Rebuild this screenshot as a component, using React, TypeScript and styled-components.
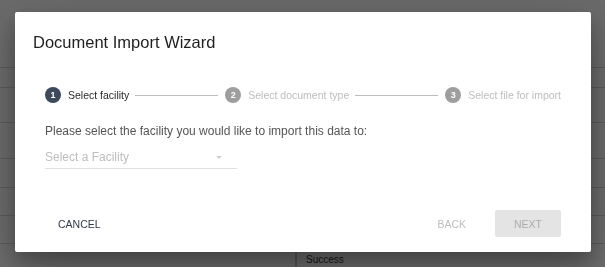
import React from 'react';
import styled, { createGlobalStyle } from 'styled-components';

const GlobalStyle = createGlobalStyle`
  html, body {
    margin: 0;
    padding: 0;
    overflow: hidden;
    background: #ffffff;
    font-family: 'Liberation Sans', Arial, Helvetica, sans-serif;
  }
`;

// page behind the modal
const Table = styled.div`
  width: 605px;
  height: 267px;
  display: flex;
  flex-direction: column;
  background: #ffffff;
`;

const Row = styled.div<{ h: number }>`
  display: flex;
  height: ${(p) => p.h}px;
  flex-shrink: 0;
  border-bottom: 1px solid #dadada;
`;

const Cell = styled.div<{ divider?: boolean }>`
  display: flex;
  align-items: center;
  padding-left: 9px;
  font-size: 10px;
  color: #333;
  ${(p) => (p.divider ? 'border-left: 2px solid #c9c9c9;' : '')}
  &:first-child {
    width: 295px;
    padding-left: 0;
  }
  &:last-child {
    flex: 1;
  }
`;

const Overlay = styled.div`
  position: fixed;
  inset: 0;
  background: rgba(0, 0, 0, 0.585);
`;

const Dialog = styled.div`
  position: fixed;
  left: 15px;
  top: 12px;
  width: 576px;
  height: 240px;
  box-sizing: border-box;
  background: #ffffff;
  border-radius: 2px;
  box-shadow: rgba(0, 0, 0, 0.25) 0 14px 45px, rgba(0, 0, 0, 0.22) 0 10px 18px;
  display: flex;
  flex-direction: column;
  padding: 20px 30px 15px 30px;
`;

const Title = styled.h3`
  margin: 0 0 35px -12px;
  font-size: 16.5px;
  line-height: 20px;
  font-weight: 400;
  color: #1f1f1f;
`;

const Stepper = styled.div`
  display: flex;
  align-items: center;
  height: 16px;
`;

const Step = styled.div<{ active?: boolean }>`
  display: flex;
  align-items: center;
  gap: 7px;
  font-size: 10.5px;
  color: ${(p) => (p.active ? '#2a2a2a' : '#bdbdbd')};
  white-space: nowrap;
`;

const StepIcon = styled.span<{ active?: boolean }>`
  width: 16px;
  height: 16px;
  border-radius: 50%;
  background: ${(p) => (p.active ? '#3c4a5b' : '#9e9e9e')};
  color: #ffffff;
  font-size: 9px;
  font-weight: 700;
  display: flex;
  align-items: center;
  justify-content: center;
`;

const Connector = styled.div`
  flex: 1;
  height: 1px;
  background: #bdbdbd;
  margin: 0 7px 0 6px;
`;

const Message = styled.p`
  margin: 20px 0 10px;
  font-size: 12px;
  line-height: 16px;
  color: #555;
`;

const SelectField = styled.div`
  width: 192px;
  height: 20px;
  box-sizing: border-box;
  padding-bottom: 4px;
  border-bottom: 1px solid #e0e0e0;
  display: flex;
  align-items: center;
  justify-content: space-between;
  font-size: 12px;
  line-height: 16px;
  color: #bdbdbd;
`;

const Arrow = styled.span`
  width: 0;
  height: 0;
  margin-right: 15px;
  margin-top: 2px;
  border-left: 3px solid transparent;
  border-right: 3px solid transparent;
  border-top: 3px solid #cfcfcf;
`;

const Actions = styled.div`
  margin-top: auto;
  display: flex;
  align-items: center;
  margin-left: -0px;
`;

const Spacer = styled.div`
  flex: 1;
`;

const Button = styled.button<{ tone: 'primary' | 'disabled' | 'raised' }>`
  height: 27px;
  min-width: ${(p) => (p.tone === 'raised' ? '66px' : 'auto')};
  padding: 0 13px;
  border: none;
  border-radius: 2px;
  font-family: inherit;
  font-size: 10.5px;
  text-transform: uppercase;
  background: ${(p) => (p.tone === 'raised' ? '#e4e4e4' : 'transparent')};
  color: ${(p) =>
    p.tone === 'primary' ? '#2f3a48' : p.tone === 'raised' ? '#acacac' : '#bdbdbd'};
  margin-left: ${(p) => (p.tone === 'raised' ? '16px' : '0')};
  cursor: pointer;
`;

const rows = [67, 19, 34, 35, 28, 27, 27];

export default function App() {
  return (
    <>
      <GlobalStyle />
      <Table>
        {rows.map((h, i) => (
          <Row key={i} h={h}>
            <Cell />
            <Cell />
          </Row>
        ))}
        <Row h={30}>
          <Cell />
          <Cell divider>Success</Cell>
        </Row>
      </Table>
      <Overlay />
      <Dialog>
        <Title>Document Import Wizard</Title>
        <Stepper>
          <Step active>
            <StepIcon active>1</StepIcon>
            Select facility
          </Step>
          <Connector />
          <Step>
            <StepIcon>2</StepIcon>
            Select document type
          </Step>
          <Connector />
          <Step>
            <StepIcon>3</StepIcon>
            Select file for import
          </Step>
        </Stepper>
        <Message>Please select the facility you would like to import this data to:</Message>
        <SelectField>
          Select a Facility
          <Arrow />
        </SelectField>
        <Actions>
          <Button tone='primary'>Cancel</Button>
          <Spacer />
          <Button tone='disabled'>Back</Button>
          <Button tone='raised'>Next</Button>
        </Actions>
      </Dialog>
    </>
  );
}
